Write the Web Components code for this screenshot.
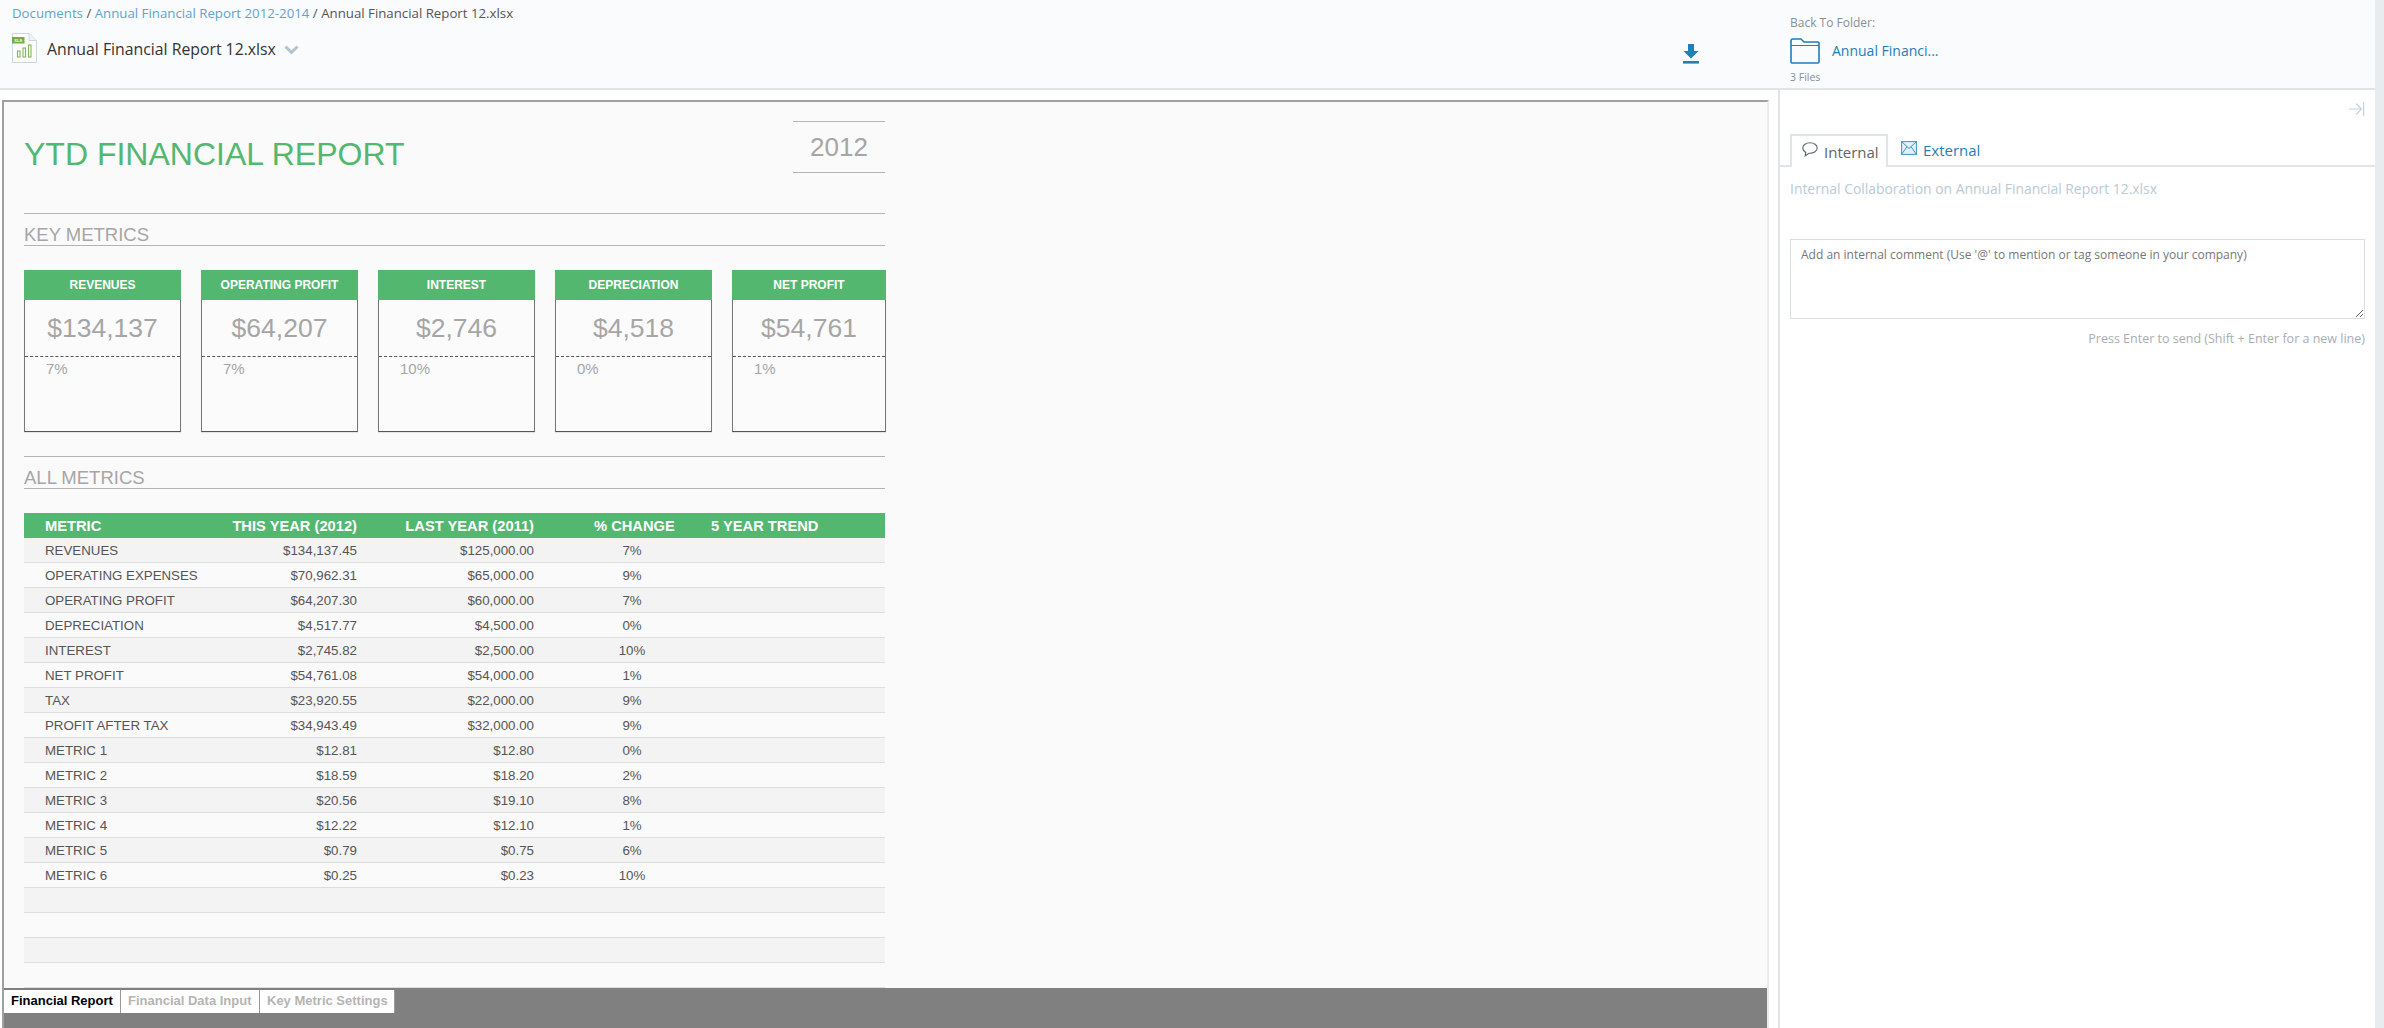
<!DOCTYPE html>
<html>
<head>
<meta charset="utf-8">
<title>Annual Financial Report 12.xlsx</title>
<style>
  html, body { margin: 0; height: 100%; overflow: hidden; background: #fff; }
  body { font-family: "Open Sans", sans-serif; }
</style>
</head>
<body>
<report-app>
  <doc-header slot="header"></doc-header>
  <report-sheet slot="main">
    <metric-card slot="cards" label="REVENUES" value="$134,137" change="7%"></metric-card>
    <metric-card slot="cards" label="OPERATING PROFIT" value="$64,207" change="7%"></metric-card>
    <metric-card slot="cards" label="INTEREST" value="$2,746" change="10%"></metric-card>
    <metric-card slot="cards" label="DEPRECIATION" value="$4,518" change="0%"></metric-card>
    <metric-card slot="cards" label="NET PROFIT" value="$54,761" change="1%"></metric-card>
  </report-sheet>
  <comments-panel slot="side"></comments-panel>
</report-app>

<script>
class ReportApp extends HTMLElement {
  constructor() {
    super();
    this.attachShadow({ mode: "open" });
  }

  connectedCallback() {
    this.shadowRoot.innerHTML = `
      <style>
        :host { display: flex; width: 100%; height: 1028px; }
        .left { flex: 1; min-width: 0; display: flex; flex-direction: column; }
        .strip { flex: 0 0 9px; background: #e8ecef; }
        .body { flex: 1; min-height: 0; display: flex; }
        .main { flex: 0 0 1769px; padding-top: 10px; box-sizing: border-box; display: flex; }
        .side { flex: 1; min-width: 0; margin-left: 9px; border-left: 2px solid #e1e5e8; }
      </style>
      <div class="left">
        <slot name="header"></slot>
        <div class="body">
          <div class="main"><slot name="main"></slot></div>
          <div class="side"><slot name="side"></slot></div>
        </div>
      </div>
      <div class="strip"></div>
    `;
  }
}

class DocHeader extends HTMLElement {
  constructor() {
    super();
    this.attachShadow({ mode: "open" });
  }

  connectedCallback() {
    this.shadowRoot.innerHTML = `
      <style>
        :host {
          display: flex;
          height: 90px;
          box-sizing: border-box;
          background: #f9fbfd;
          border-bottom: 2px solid #e1e5e8;
          font-family: "Open Sans", sans-serif;
        }
        a { color: #5fa4cc; text-decoration: none; }
        .left { flex: 1; padding: 3px 0 0 12px; }
        .crumbs { font-size: 13.25px; line-height: 20px; color: #555; }
        .file { display: flex; align-items: center; margin-top: 10px; height: 30px; }
        .file svg.doc { margin-right: 10px; }
        .name { font-size: 15.8px; color: #333; margin-top: 1px; }
        .chev { margin-left: 8px; margin-top: 3px; }
        .download { flex: 0 0 auto; margin: 44px 91px 0 0; }
        .folder { flex: 0 0 585px; box-sizing: border-box; padding-top: 15px; }
        .back { font-size: 12px; line-height: 16px; color: #8b8f92; }
        .link { display: flex; align-items: center; height: 26px; margin-top: 7px; gap: 12px; font-size: 14px; color: #1f7fb8; }
        .link span { margin-top: -1px; }
        .count { font-size: 10.5px; line-height: 14px; margin-top: 6px; color: #8b8f92; }
      </style>
      <div class="left">
        <div class="crumbs"><a>Documents</a> / <a>Annual Financial Report 2012-2014</a> / Annual Financial Report 12.xlsx</div>
        <div class="file">
          <svg class="doc" width="25" height="31" viewBox="0 0 25 31">
            <path d="M.5 .5H17L24.5 7.5V29.5H.5Z" fill="#fdfdfd" stroke="#c9d8de"/>
            <path d="M17 .5V7.5H24.5" fill="#eef3f5" stroke="#c9d8de"/>
            <rect x="0" y="4" width="12.5" height="6.5" fill="#76ad45"/>
            <text x="6.2" y="9" font-size="4" font-weight="700" text-anchor="middle" fill="#fff" font-family="Liberation Sans">XLS</text>
            <g fill="none" stroke="#85b55a" stroke-width="1.1">
              <rect x="5.5" y="18" width="2.5" height="6"/>
              <rect x="11" y="15" width="2.5" height="9"/>
              <rect x="16.5" y="12" width="2.5" height="12"/>
            </g>
          </svg>
          <span class="name">Annual Financial Report 12.xlsx</span>
          <svg class="chev" width="15" height="10" viewBox="0 0 15 10"><path d="M1.5 1.5L7.5 7.5L13.5 1.5" fill="none" stroke="#b4c3cc" stroke-width="3"/></svg>
        </div>
      </div>
      <svg class="download" width="16" height="20" viewBox="0 0 16 20" fill="#1f7fb8">
        <path d="M5 0H11V7H15.5L8 14.5L.5 7H5Z"/>
        <rect x="0" y="17" width="16" height="2.6"/>
      </svg>
      <div class="folder">
        <div class="back">Back To Folder:</div>
        <div class="link">
          <svg width="30" height="26" viewBox="0 0 30 26" fill="none" stroke="#1f7fb8" stroke-width="1.6">
            <path d="M1 3C1 1.8 1.6 1 2.8 1H11L14 4H28C28.6 4 29 4.4 29 5V24C29 24.6 28.6 25 28 25H2C1.4 25 1 24.6 1 24Z"/>
            <path d="M1 7.5H29" stroke-width="1"/>
          </svg>
          <span>Annual Financi...</span>
        </div>
        <div class="count">3 Files</div>
      </div>
    `;
  }
}

class SheetRule extends HTMLElement {
  constructor() {
    super();
    this.attachShadow({ mode: "open" });
  }

  connectedCallback() {
    this.shadowRoot.innerHTML = `
      <style>
        :host {
          display: block;
          height: 33px;
          box-sizing: border-box;
          border-top: 1px solid #b4b4b4;
          border-bottom: 1px solid #b4b4b4;
          font: 18.5px/42px "Liberation Sans", Arial, sans-serif;
          color: #a6a6a6;
          white-space: nowrap;
        }
      </style>
      <slot></slot>
    `;
  }
}

class MetricCard extends HTMLElement {
  constructor() {
    super();
    this.attachShadow({ mode: "open" });
  }

  connectedCallback() {
    this.shadowRoot.innerHTML = `
      <style>
        :host {
          display: block;
          flex: 0 0 157px;
          height: 162px;
          box-sizing: border-box;
          border: 1px solid #777;
          border-top: 0;
          border-bottom-color: #555;
          box-shadow: 0 1px 1px #e4e4e4;
          font-family: "Liberation Sans", Arial, sans-serif;
          background: #fbfbfb;
        }
        :host(:last-child) { flex: 1; }
        .head {
          height: 30px;
          margin: 0 -1px;
          background: #54b770;
          color: #fff;
          font-size: 12px;
          font-weight: 700;
          line-height: 30px;
          text-align: center;
        }
        .value {
          height: 56px;
          border-bottom: 1px dashed #555;
          font-size: 26.5px;
          line-height: 56px;
          text-align: center;
          color: #a6a6a6;
        }
        .change { padding-left: 21px; font-size: 15px; line-height: 24px; color: #a6a6a6; }
      </style>
      <div class="head">${this.getAttribute("label")}</div>
      <div class="value">${this.getAttribute("value")}</div>
      <div class="change">${this.getAttribute("change")}</div>
    `;
  }
}

const METRIC_ROWS = [
  ["REVENUES", "$134,137.45", "$125,000.00", "7%"],
  ["OPERATING EXPENSES", "$70,962.31", "$65,000.00", "9%"],
  ["OPERATING PROFIT", "$64,207.30", "$60,000.00", "7%"],
  ["DEPRECIATION", "$4,517.77", "$4,500.00", "0%"],
  ["INTEREST", "$2,745.82", "$2,500.00", "10%"],
  ["NET PROFIT", "$54,761.08", "$54,000.00", "1%"],
  ["TAX", "$23,920.55", "$22,000.00", "9%"],
  ["PROFIT AFTER TAX", "$34,943.49", "$32,000.00", "9%"],
  ["METRIC 1", "$12.81", "$12.80", "0%"],
  ["METRIC 2", "$18.59", "$18.20", "2%"],
  ["METRIC 3", "$20.56", "$19.10", "8%"],
  ["METRIC 4", "$12.22", "$12.10", "1%"],
  ["METRIC 5", "$0.79", "$0.75", "6%"],
  ["METRIC 6", "$0.25", "$0.23", "10%"],
  ["", "", "", ""],
  ["", "", "", ""],
  ["", "", "", ""],
  ["", "", "", ""],
];

class MetricTable extends HTMLElement {
  constructor() {
    super();
    this.attachShadow({ mode: "open" });
  }

  connectedCallback() {
    const rows = METRIC_ROWS.map((r) => `
      <div class="row">
        <span class="name">${r[0]}</span><span class="num">${r[1]}</span><span class="num">${r[2]}</span><span class="pct">${r[3]}</span><span></span>
      </div>`).join("");

    this.shadowRoot.innerHTML = `
      <style>
        :host { display: block; font-family: "Liberation Sans", Arial, sans-serif; }
        .row, .head {
          display: grid;
          grid-template-columns: 190px 143px 177px 136px 1fr;
          height: 25px;
          box-sizing: border-box;
          align-items: center;
        }
        .name { padding-left: 21px; white-space: nowrap; }
        .num { text-align: right; white-space: nowrap; }
        .pct { padding-left: 60px; text-align: center; white-space: nowrap; }
        .trend { padding-left: 41px; white-space: nowrap; }
        .head {
          background: #54b770;
          color: #fff;
          font-size: 14.7px;
          font-weight: 700;
        }
        .row { font-size: 13.3px; color: #555; border-bottom: 1px solid #dedede; background: #fafafa; }
        .row:nth-child(odd) { background: #f3f3f3; }
      </style>
      <div class="head">
        <span class="name">METRIC</span><span class="num">THIS YEAR (2012)</span><span class="num">LAST YEAR (2011)</span><span class="pct">% CHANGE</span><span class="trend">5 YEAR TREND</span>
      </div>
      ${rows}
    `;
  }
}

class SheetTabs extends HTMLElement {
  constructor() {
    super();
    this.attachShadow({ mode: "open" });
  }

  connectedCallback() {
    this.shadowRoot.innerHTML = `
      <style>
        :host {
          display: flex;
          align-items: flex-start;
          flex: 0 0 40px;
          box-sizing: border-box;
          padding-top: 2px;
          background: #808080;
          font: 700 13px "Liberation Sans", Arial, sans-serif;
        }
        span {
          height: 23px;
          line-height: 22px;
          box-sizing: border-box;
          padding: 0 7px;
          background: #fff;
          color: #b4b4b4;
          border-right: 1px solid #999;
          white-space: nowrap;
        }
        .on { color: #000; }
      </style>
      <span class="on" style="width:117px">Financial Report</span>
      <span style="width:139px">Financial Data Input</span>
      <span style="width:135px">Key Metric Settings</span>
    `;
  }
}

class ReportSheet extends HTMLElement {
  constructor() {
    super();
    this.attachShadow({ mode: "open" });
  }

  connectedCallback() {
    this.shadowRoot.innerHTML = `
      <style>
        :host {
          display: flex;
          flex-direction: column;
          flex: 1;
          margin-left: 2px;
          box-sizing: border-box;
          height: 928px;
          border-top: 2px solid #a0a0a0;
          border-left: 2px solid #a0a0a0;
          border-right: 2px solid #ececec;
          background: #fafafa;
          font-family: "Liberation Sans", Arial, sans-serif;
        }
        .page { flex: 1; min-height: 0; width: 862px; padding: 19px 0 0 20px; }
        .top { display: flex; justify-content: space-between; height: 52px; margin-right: 1px; }
        h1 { margin: 15px 0 0; font-size: 32px; font-weight: 400; line-height: 37px; color: #54b770; white-space: nowrap; }
        .year {
          width: 92px;
          height: 52px;
          box-sizing: border-box;
          border-top: 1px solid #b4b4b4;
          border-bottom: 1px solid #b4b4b4;
          text-align: center;
          font-size: 26px;
          line-height: 50px;
          color: #a6a6a6;
        }
        sheet-rule, metric-table { margin-right: 1px; }
        .first { margin-top: 40px; }
        .cards { display: flex; gap: 20px; margin-top: 24px; }
        .second { margin-top: 24px; }
        metric-table { margin-top: 24px; }
      </style>
      <div class="page">
        <div class="top">
          <h1>YTD FINANCIAL REPORT</h1>
          <div class="year">2012</div>
        </div>
        <sheet-rule class="first">KEY METRICS</sheet-rule>
        <div class="cards"><slot name="cards"></slot></div>
        <sheet-rule class="second">ALL METRICS</sheet-rule>
        <metric-table></metric-table>
      </div>
      <sheet-tabs></sheet-tabs>
    `;
  }
}

class CommentsPanel extends HTMLElement {
  constructor() {
    super();
    this.attachShadow({ mode: "open" });
  }

  connectedCallback() {
    this.shadowRoot.innerHTML = `
      <style>
        :host { display: block; font-family: "Open Sans", sans-serif; font-size: 14px; }
        .tools { display: flex; justify-content: flex-end; height: 44px; padding: 12px 10px 0 0; box-sizing: border-box; }
        .tabs { display: flex; height: 33px; box-sizing: border-box; padding-left: 10px; border-bottom: 2px solid #e1e5e8; }
        .tab { display: flex; align-items: center; gap: 6px; height: 33px; box-sizing: border-box; padding: 0 10px; }
        .tab.on { width: 98px; background: #fff; color: #5c6468; border: 2px solid #e1e5e8; border-bottom: 0; font-size: 15px; }
        .tab.on svg { margin-top: -4px; flex: none; }
        .tab.off { color: #1f7fb8; padding-left: 13px; font-size: 15px; margin-top: -1px; }
        .tab.off svg { margin-top: -3px; flex: none; }
        .body { padding: 0 10px; }
        .title { margin-top: 12px; line-height: 20px; font-size: 13.9px; color: #b9cad6; white-space: nowrap; }
        .box {
          margin-top: 40px;
          height: 80px;
          box-sizing: border-box;
          padding: 5px 10px;
          border: 1px solid #d8dfe4;
          background: #fff;
          font-size: 12px;
          line-height: 20px;
          color: #777;
          overflow: auto;
          resize: vertical;
          white-space: nowrap;
        }
        .hint { margin-top: 10px; line-height: 20px; text-align: right; font-size: 12.5px; color: #a9adb0; white-space: nowrap; }
      </style>
      <div class="tools">
        <svg width="16" height="14" viewBox="0 0 16 14" fill="none" stroke="#c3d2da" stroke-width="1.2">
          <path d="M0 7H12M7 1.5L12.5 7L7 12.5M14.6 0V14"/>
        </svg>
      </div>
      <div class="tabs">
        <div class="tab on">
          <svg width="16" height="15" viewBox="0 0 16 15" fill="none" stroke="#5d6a72" stroke-width="1.1">
            <path d="M8 .8C4 .8 .8 3 .8 6C.8 8 2 9.5 3.8 10.4L3.2 13.8L7 11.2C7.3 11.2 7.7 11.2 8 11.2C12 11.2 15.2 9 15.2 6C15.2 3 12 .8 8 .8Z"/>
          </svg>
          <span>Internal</span>
        </div>
        <div class="tab off">
          <svg width="16" height="14" viewBox="0 0 16 14" fill="#e4f0f8" stroke="#3f93c6" stroke-width="1">
            <rect x=".6" y=".6" width="14.8" height="12.8"/>
            <path d="M.6 .6L8 7.5L15.4 .6M.6 13.4L6 5.6M15.4 13.4L10 5.6" fill="none"/>
          </svg>
          <span>External</span>
        </div>
      </div>
      <div class="body">
        <div class="title">Internal Collaboration on Annual Financial Report 12.xlsx</div>
        <div class="box">Add an internal comment (Use '@' to mention or tag someone in your company)</div>
        <div class="hint">Press Enter to send (Shift + Enter for a new line)</div>
      </div>
    `;
  }
}

customElements.define("report-app", ReportApp);
customElements.define("doc-header", DocHeader);
customElements.define("sheet-rule", SheetRule);
customElements.define("metric-card", MetricCard);
customElements.define("metric-table", MetricTable);
customElements.define("sheet-tabs", SheetTabs);
customElements.define("report-sheet", ReportSheet);
customElements.define("comments-panel", CommentsPanel);
</script>
</body>
</html>
